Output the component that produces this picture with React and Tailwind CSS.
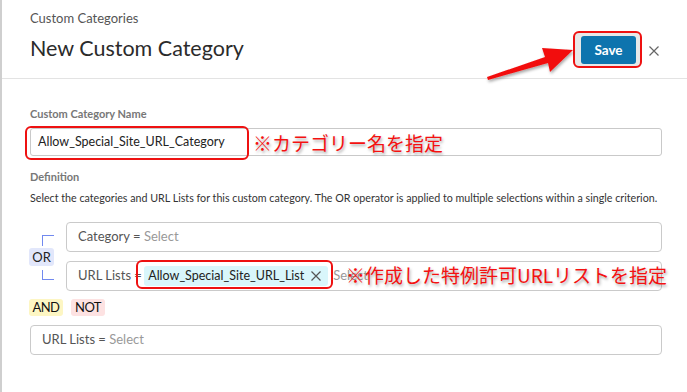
import React from "react";

const jp = "font-['Noto_Sans_CJK_JP','Noto_Sans',sans-serif]";

function XIcon({ className }) {
  return (
    <svg viewBox="0 0 10 10" className={className} fill="none" stroke="currentColor" strokeWidth="1.2">
      <path d="M0.5 0.5 L9.5 9.5 M9.5 0.5 L0.5 9.5" />
    </svg>
  );
}

export default function App() {
  return (
    <div className="relative w-[687px] h-[392px] bg-white border-l-2 border-[#cfcfcf] overflow-hidden font-['Lato',sans-serif] text-[#333]">
      {/* Header */}
      <div className="flex justify-between h-[79px] border-b border-[#e3e3e3] pl-[28px] pr-[28px]">
        <div className="pt-[10px]">
          <div className="text-[13px] leading-[16px] text-[#555]">Custom Categories</div>
          <div className="mt-[8px] text-[21.5px] leading-[28px] text-[#2b2b2b]">New Custom Category</div>
        </div>
        <div className="flex items-start gap-[7px] pt-[31px]">
          <div className="rounded-[6px] border-2 border-[#ee1111] bg-[#e8e8e8] pl-[6px] pr-[4px] pt-[3px] pb-[2px]">
            <button className="block w-[55px] h-[28px] rounded-[3px] bg-[#0e74ae] text-white text-[13.5px] font-bold">
              Save
            </button>
          </div>
          <XIcon className="mt-[15px] w-[10px] h-[10px] text-[#666]" />
        </div>
      </div>

      {/* Body */}
      <div className="pl-[28px] pr-[25px] pt-[28px]">
        <div className="text-[11px] leading-[14px] font-bold text-[#777]">Custom Category Name</div>
        <div className="relative mt-[7px] h-[28px] rounded-[3px] border border-[#c9c9c9] flex items-center pl-[7px] text-[12.5px] text-[#222]">
          Allow_Special_Site_URL_Category
          <span className="absolute left-[-6px] top-[-3px] w-[224px] h-[34px] rounded-[6px] border-2 border-[#ee1111]" />
          <span
            className={`absolute left-[222px] top-[2px] text-[19px] leading-[24px] text-[#f41111] whitespace-nowrap ${jp} [text-shadow:1px_2px_3px_rgba(0,0,0,0.35)]`}
          >
            ※カテゴリー名を指定
          </span>
        </div>

        <div className="mt-[14px] text-[11px] leading-[14px] font-bold text-[#777]">Definition</div>
        <div className="mt-[7px] text-[10.7px] leading-[14px] text-[#333] whitespace-nowrap">
          Select the categories and URL Lists for this custom category. The OR operator is applied to multiple selections within a single criterion.
        </div>

        <div className="mt-[17px] flex">
          <div className="w-[36px] shrink-0 flex flex-col pt-[13px]">
            <div className="ml-[12px] w-[12px] h-[11px] border-l-[1.5px] border-t-[1.5px] border-[#7189ef]" />
            <div className="mt-[2px] -ml-px w-[25px] h-[18px] rounded-[3px] bg-[#e2e7fb] text-[13px] leading-[18px] text-center text-[#222]">
              OR
            </div>
            <div className="mt-[4px] ml-[12px] w-[12px] h-[10px] border-l-[1.5px] border-b-[1.5px] border-[#7189ef]" />
          </div>
          <div className="flex-1 flex flex-col gap-[9px]">
            <div className="h-[30px] rounded-[4px] border border-[#cacaca] flex items-center pl-[11px] text-[13px]">
              <span className="text-[#555]">Category =&nbsp;</span>
              <span className="text-[#999]">Select</span>
            </div>
            <div className="relative h-[30px] rounded-[4px] border border-[#cacaca] flex items-center pl-[11px] text-[13px]">
              <span className="text-[#555] whitespace-nowrap">URL Lists =&nbsp;</span>
              <span className="relative ml-[-1px] h-[20px] w-[184px] shrink-0 rounded-[3px] bg-[#d9f6fb] flex items-center pl-[4px] text-[#222] text-[12.5px]">
                Allow_Special_Site_URL_List
                <XIcon className="absolute right-[7px] top-[5px] w-[10px] h-[10px] text-[#555]" />
                <span className="absolute left-[-8px] right-[-5px] top-[-6px] bottom-[-3px] rounded-[6px] border-2 border-[#ee1111]" />
              </span>
              <span className="ml-[5px] text-[#999]">Select</span>
              <span
                className={`absolute left-[279px] top-[1px] text-[19px] leading-[24px] text-[#f41111] whitespace-nowrap ${jp} [text-shadow:1px_2px_3px_rgba(0,0,0,0.35)]`}
              >
                ※作成した特例許可URLリストを指定
              </span>
            </div>
          </div>
        </div>

        <div className="mt-[8px] flex gap-[8px] -ml-px">
          <div className="h-[17px] w-[34px] rounded-[3px] bg-[#fdf6c3] text-[13px] leading-[17px] text-center text-[#111] tracking-[-0.6px]">
            AND
          </div>
          <div className="h-[17px] w-[34px] rounded-[3px] bg-[#fde2e2] text-[13px] leading-[17px] text-center text-[#111] tracking-[-0.6px]">
            NOT
          </div>
        </div>

        <div className="mt-[9px] h-[30px] rounded-[4px] border border-[#cacaca] flex items-center pl-[11px] text-[13px]">
          <span className="text-[#555]">URL Lists =&nbsp;</span>
          <span className="text-[#999]">Select</span>
        </div>
      </div>

      {/* Arrow annotation */}
      <svg className="absolute inset-0 pointer-events-none" width="687" height="392" viewBox="0 0 687 392">
        <defs>
          <filter id="sh" x="-20%" y="-20%" width="140%" height="160%">
            <feDropShadow dx="1" dy="2" stdDeviation="1.5" floodColor="#000" floodOpacity="0.35" />
          </filter>
        </defs>
        <polygon points="485,77 543,57 540,48 571,50 548,72 546,63 486,80" fill="#f20f0f" filter="url(#sh)" />
      </svg>
    </div>
  );
}
